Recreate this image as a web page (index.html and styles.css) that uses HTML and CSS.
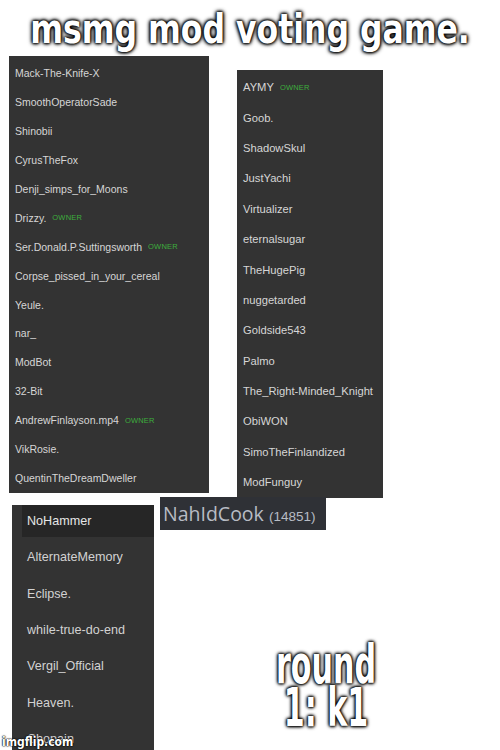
FILE: index.html
```html
<!DOCTYPE html>
<html lang="en">
<head>
    <meta charset="UTF-8">
    <meta name="viewport" content="width=device-width, initial-scale=1.0">
    <title>msmg mod voting game.</title>
    <link rel="stylesheet" href="styles.css">
</head>
<body>
    <div class="meme">
        <ul class="panel panel-left">
            <li>Mack-The-Knife-X</li>
            <li>SmoothOperatorSade</li>
            <li>Shinobii</li>
            <li>CyrusTheFox</li>
            <li>Denji_simps_for_Moons</li>
            <li>Drizzy. <span class="tag">OWNER</span></li>
            <li>Ser.Donald.P.Suttingsworth <span class="tag">OWNER</span></li>
            <li>Corpse_pissed_in_your_cereal</li>
            <li>Yeule.</li>
            <li>nar_</li>
            <li>ModBot</li>
            <li>32-Bit</li>
            <li>AndrewFinlayson.mp4 <span class="tag">OWNER</span></li>
            <li>VikRosie.</li>
            <li>QuentinTheDreamDweller</li>
        </ul>

        <ul class="panel panel-right">
            <li>AYMY <span class="tag">OWNER</span></li>
            <li>Goob.</li>
            <li>ShadowSkul</li>
            <li>JustYachi</li>
            <li>Virtualizer</li>
            <li>eternalsugar</li>
            <li>TheHugePig</li>
            <li>nuggetarded</li>
            <li>Goldside543</li>
            <li>Palmo</li>
            <li>The_Right-Minded_Knight</li>
            <li>ObiWON</li>
            <li>SimoTheFinlandized</li>
            <li>ModFunguy</li>
        </ul>

        <div class="nick">NahIdCook <span class="count">(14851)</span></div>

        <ul class="panel panel-bottom">
            <li class="active">NoHammer</li>
            <li>AlternateMemory</li>
            <li>Eclipse.</li>
            <li>while-true-do-end</li>
            <li>Vergil_Official</li>
            <li>Heaven.</li>
            <li>Chopain</li>
        </ul>

        <h1 class="caption caption-top">msmg mod voting game.</h1>
        <p class="caption caption-round">round<br>1: k1</p>
        <span class="watermark">imgflip.com</span>
    </div>
</body>
</html>
```

FILE: styles.css
```css
body {
    margin: 0;
    background: white;
    font-family: "Liberation Sans", Arial, sans-serif;
}
.meme {
    position: relative;
    width: 500px;
    height: 750px;
    overflow: hidden;
    background: white;
}

/* pasted screenshot pieces */
.panel {
    position: absolute;
    margin: 0;
    list-style: none;
    background-color: #333333;
    color: #d6d6d6;
    display: flex;
    flex-direction: column;
    box-sizing: border-box;
}
.panel li {
    display: flex;
    align-items: center;
    white-space: nowrap;
}
.panel-left {
    left: 9px;
    top: 56px;
    width: 200px;
    height: 437px;
    padding: 3px 0 0 6px;
    font-size: 10.5px;
}
.panel-left li {
    height: 28.9px;
}
.panel-right {
    left: 237px;
    top: 70px;
    width: 146px;
    height: 428px;
    padding: 2px 0 0 6px;
    font-size: 11.2px;
}
.panel-right li {
    height: 30.4px;
}
.panel-bottom {
    left: 12px;
    top: 505px;
    width: 142px;
    height: 250px;
    padding: 0 0 0 10px;
    gap: 4.5px;
    font-size: 12.6px;
    color: #d2d2d2;
}
.panel-bottom li {
    height: 32px;
    padding-left: 5px;
}
.panel-bottom .active {
    background-color: #262626;
    color: #e6e6e6;
}
.tag {
    color: #3dae3d;
    font-size: 7.5px;
    margin-left: 6px;
    letter-spacing: 0.2px;
}

.nick {
    position: absolute;
    left: 160px;
    top: 497px;
    width: 166px;
    height: 33px;
    box-sizing: border-box;
    padding: 3px 0 0 3px;
    background-color: #2f3136;
    color: #b8bcc4;
    font-family: "Open Sans", sans-serif;
    font-size: 19.5px;
    white-space: nowrap;
}
.count {
    font-family: "Liberation Sans", Arial, sans-serif;
    font-size: 13.5px;
}

/* meme captions */
.caption {
    position: absolute;
    margin: 0;
    color: white;
    font-family: "DejaVu Sans Condensed", "DejaVu Sans", sans-serif;
    font-stretch: condensed;
    font-weight: bold;
    white-space: nowrap;
    text-align: center;
    text-shadow: 0 0 3px black, 0 0 3px black, 0 0 5px black, 0 0 6px black;
}
.caption-top {
    left: -50px;
    right: -50px;
    top: 2px;
    font-size: 40px;
    line-height: 54px;
    transform: scaleX(0.875);
}
.caption-round {
    left: 226px;
    width: 200px;
    top: 643px;
    font-size: 54px;
    line-height: 43px;
    transform: scaleX(0.62);
}
.watermark {
    position: absolute;
    left: 2px;
    bottom: 1px;
    color: white;
    font-family: "DejaVu Sans Condensed", sans-serif;
    font-weight: bold;
    font-size: 12px;
    text-shadow: 0 0 1px black, 0 0 1px black, 0 0 2px black;
}
```
